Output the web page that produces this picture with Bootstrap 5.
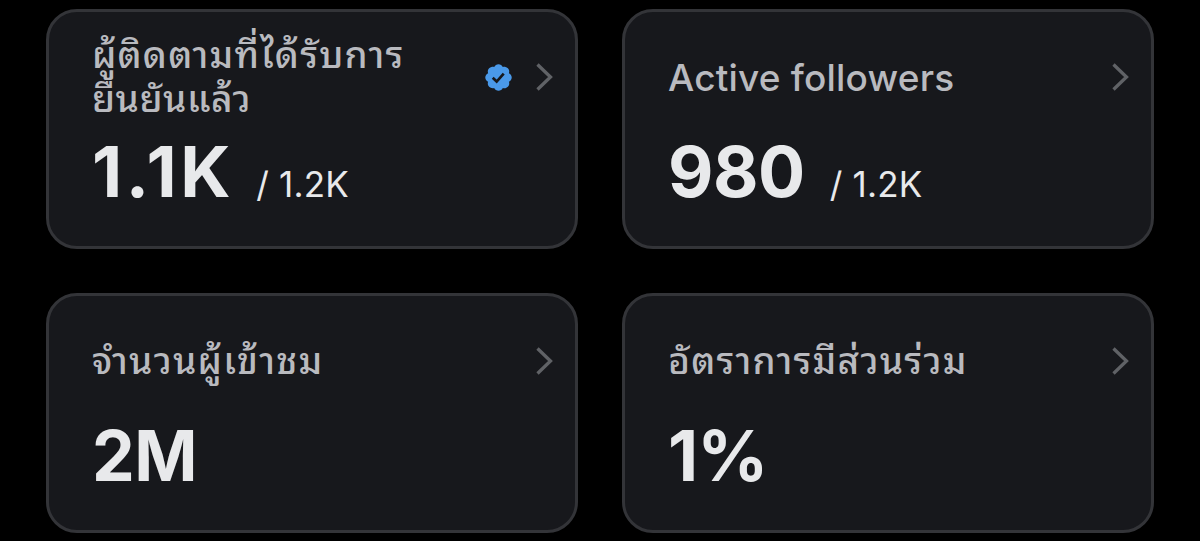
<!DOCTYPE html>
<html lang="th"><head><meta charset="utf-8"><meta name="viewport" content="width=device-width, initial-scale=1"><title>Analytics</title>
<link href="https://cdn.jsdelivr.net/npm/bootstrap@5.3.0/dist/css/bootstrap.min.css" rel="stylesheet">
<style>
body{background:#000;color:#e8e9eb;font-family:Inter,"Noto Sans Thai Looped","Loma","Garuda","Noto Sans Thai",sans-serif;height:541px;overflow:hidden}
.board{padding:9px 46px 0;grid-template-columns:532px 532px;gap:44px}
.stat{height:240px;background:#17181c;border:3px solid #333438;border-radius:31px;padding:21px 19px 0 43px}
.head{height:88px;color:#b9babf;font-size:37px;font-weight:500;line-height:44px;white-space:nowrap}
.latin{font-size:37px;letter-spacing:.2px;padding-top:1px}
.thai{letter-spacing:1.25px}
.tight{letter-spacing:.5px}
.values{padding-top:9px}
.big{font-size:70px;font-weight:700;line-height:84px}
.of{font-size:35px;line-height:44px;letter-spacing:.2px}
.k1{letter-spacing:3.600px;margin-right:-2px}
.k2{letter-spacing:-.5px;margin-right:1px}
.k3{letter-spacing:-.5px;transform:scaleX(.97);transform-origin:left}
.k4{letter-spacing:-1px}
.chev{width:24px;height:34px}
.seal{width:31px;height:31px;margin-right:18px}
</style></head><body>
<svg class="d-none"><symbol id="chev" viewBox="0 0 24 34"><path d="M5.500 4.500 18.500 17 5.500 29.500" fill="none" stroke="#606266" stroke-width="3.300"/></symbol></svg>
<main class="board d-grid">
<section class="stat"><div class="head d-flex align-items-center"><span class="thai">ผู้ติดตามที่ได้รับการ<br><span class="tight">ยืนยันแล้ว</span></span>
<svg class="seal ms-auto" viewBox="0 0 22 22"><path fill="#4a99e9" d="M20.396 11c-.018-.646-.215-1.275-.57-1.816-.354-.54-.852-.972-1.438-1.246.223-.607.27-1.264.14-1.897-.131-.634-.437-1.218-.882-1.687-.47-.445-1.053-.75-1.687-.882-.633-.13-1.290-.083-1.897.14-.273-.587-.704-1.086-1.245-1.440S11.647 1.620 11 1.604c-.646.017-1.273.213-1.813.568s-.969.854-1.240 1.440c-.608-.223-1.267-.272-1.902-.140-.635.130-1.220.436-1.690.882-.445.470-.749 1.055-.878 1.688-.130.633-.080 1.290.144 1.896-.587.274-1.087.705-1.443 1.245-.356.540-.555 1.170-.574 1.817.020.647.218 1.276.574 1.817.356.540.856.972 1.443 1.245-.224.606-.274 1.263-.144 1.896.130.634.433 1.218.877 1.688.470.443 1.054.747 1.687.878.633.132 1.290.084 1.897-.136.274.586.705 1.084 1.246 1.439.540.354 1.170.551 1.816.569.647-.016 1.276-.213 1.817-.567s.972-.854 1.245-1.440c.604.239 1.266.296 1.903.164.636-.132 1.220-.447 1.680-.907.460-.460.776-1.044.908-1.681s.075-1.299-.165-1.903c.586-.274 1.084-.705 1.439-1.246.354-.540.551-1.170.569-1.816z"/><path fill="none" stroke="#17181c" stroke-width="1.900" d="m6.900 11.200 2.800 2.700 5-5.600"/></svg>
<svg class="chev"><use href="#chev"/></svg></div>
<div class="values d-flex align-items-baseline"><span class="big k1">1.1K</span><span class="of ms-4">/ 1.2K</span></div></section>
<section class="stat"><div class="head d-flex align-items-center"><span class="latin">Active followers</span><svg class="chev ms-auto"><use href="#chev"/></svg></div>
<div class="values d-flex align-items-baseline"><span class="big k2">980</span><span class="of ms-4">/ 1.2K</span></div></section>
<section class="stat"><div class="head d-flex align-items-center"><span class="thai">จำนวนผู้เข้าชม</span><svg class="chev ms-auto"><use href="#chev"/></svg></div>
<div class="values d-flex"><span class="big k3">2M</span></div></section>
<section class="stat"><div class="head d-flex align-items-center"><span class="thai">อัตราการมีส่วนร่วม</span><svg class="chev ms-auto"><use href="#chev"/></svg></div>
<div class="values d-flex"><span class="big k4">1%</span></div></section>
</main>
<script src="https://cdn.jsdelivr.net/npm/bootstrap@5.3.0/dist/js/bootstrap.bundle.min.js"></script>
</body></html>
